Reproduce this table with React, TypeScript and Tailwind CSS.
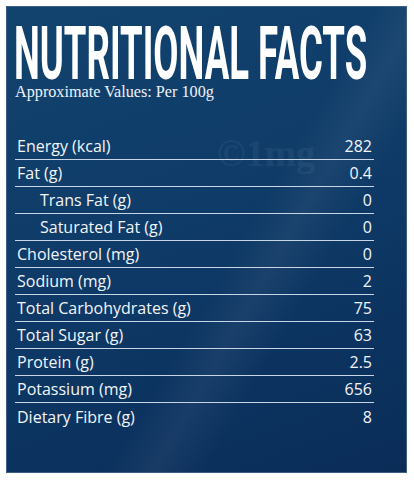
import React from "react";

interface NutrientRow {
  label: string;
  value: string;
  indent?: boolean;
}

const rows: NutrientRow[] = [
  { label: "Energy (kcal)", value: "282" },
  { label: "Fat (g)", value: "0.4" },
  { label: "Trans Fat (g)", value: "0", indent: true },
  { label: "Saturated Fat (g)", value: "0", indent: true },
  { label: "Cholesterol (mg)", value: "0" },
  { label: "Sodium (mg)", value: "2" },
  { label: "Total Carbohydrates (g)", value: "75" },
  { label: "Total Sugar (g)", value: "63" },
  { label: "Protein (g)", value: "2.5" },
  { label: "Potassium (mg)", value: "656" },
  { label: "Dietary Fibre (g)", value: "8" },
];

const App: React.FC = () => {
  return (
    <div className="w-[414px] h-[480px] bg-white p-[6px]">
      <div className="relative w-[401px] h-[467px] overflow-hidden border border-[#3d5f85] bg-[linear-gradient(160deg,#12436f_0%,#0f3b68_45%,#0c3360_75%,#0a2d58_100%)]">
        <div className="absolute inset-0 bg-[linear-gradient(120deg,transparent_55%,rgba(255,255,255,0.05)_62%,transparent_70%)]" />
        <span className="absolute left-[210px] top-[118px] text-[38px] font-bold text-white/[0.05] font-['Liberation_Serif',serif]">
          ©1mg
        </span>

        <div className="relative h-[126px] pl-[7px] pt-[16px]">
          <div className="h-[60px] w-[380px] overflow-visible">
            <h1 className="whitespace-nowrap origin-left scale-x-[0.487] font-['Roboto',sans-serif] font-bold text-[75px] leading-[60px] text-white">
              NUTRITIONAL FACTS
            </h1>
          </div>
          <p className="pl-[1px] font-['Liberation_Serif',serif] text-[16.2px] leading-[18px] text-[#eef2f7]">
            Approximate Values: Per 100g
          </p>
        </div>

        <div className="relative ml-[8px] w-[359px] font-['Open_Sans',sans-serif] text-[16px] text-[#f2f5f9]">
          {rows.map((row, i) => (
            <div
              key={i}
              className={`flex items-end justify-between h-[27px] pb-[1px] ${
                i < rows.length - 1 ? "border-b-[1.5px] border-[#c8d5e4]" : ""
              }`}
            >
              <span className={row.indent ? "pl-[25px]" : "pl-[2px]"}>{row.label}</span>
              <span className="pr-[2px]">{row.value}</span>
            </div>
          ))}
        </div>
      </div>
    </div>
  );
};

export default App;
